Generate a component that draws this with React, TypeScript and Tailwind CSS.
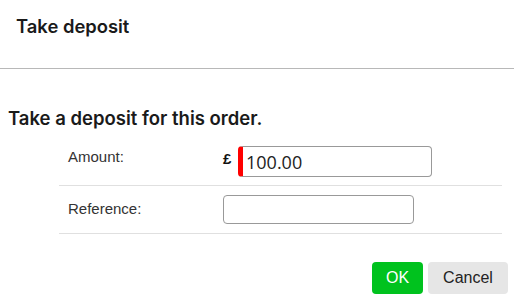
import React from 'react';

const App: React.FC = () => {
  return (
    <div className="w-[514px] h-[301px] bg-white overflow-hidden font-['Inter',sans-serif] text-[#1a1a1a]">
      <div className="h-[69px] border-b border-[#b8b8b8] flex items-center pl-4 pb-[14px]">
        <h1 className="text-[18.4px] font-semibold">Take deposit</h1>
      </div>
      <h2 className="mt-[37px] ml-2 text-[18.5px] font-semibold leading-[24px]">Take a deposit for this order.</h2>
      <div className="ml-[59px] mr-3 mt-[8px] font-['Liberation_Sans',Arial,sans-serif] text-[15px] text-[#333]">
        <div className="h-[48px] flex items-center border-b border-[#e0e0e0]">
          <div className="w-[164px] pl-[9px] pb-[8px]">Amount:</div>
          <div className="flex items-center">
            <span className="w-[15px] font-bold text-[15px] text-[#111] pb-[4px]">£</span>
            <input
              defaultValue="100.00"
              className="w-[194px] h-[31px] rounded-[4px] border border-[#999] border-l-[5px] border-l-[#ff0000] pl-[3px] text-[18px] text-[#222] font-['Open_Sans',sans-serif] outline-none"
            />
          </div>
        </div>
        <div className="h-[48px] flex items-center border-b border-[#e0e0e0]">
          <div className="w-[164px] pl-[9px]">Reference:</div>
          <input className="w-[191px] h-[29px] rounded-[4px] border border-[#999] outline-none" />
        </div>
      </div>
      <div className="flex justify-end gap-[5px] mt-[28px] mr-[6px] font-['Liberation_Sans',Arial,sans-serif] text-[16px]">
        <button className="w-[51px] h-[32px] rounded-[4px] bg-[#00c21e] text-white">OK</button>
        <button className="w-[80px] h-[32px] rounded-[4px] bg-[#e6e6e6] text-[#222]">Cancel</button>
      </div>
    </div>
  );
};

export default App;
